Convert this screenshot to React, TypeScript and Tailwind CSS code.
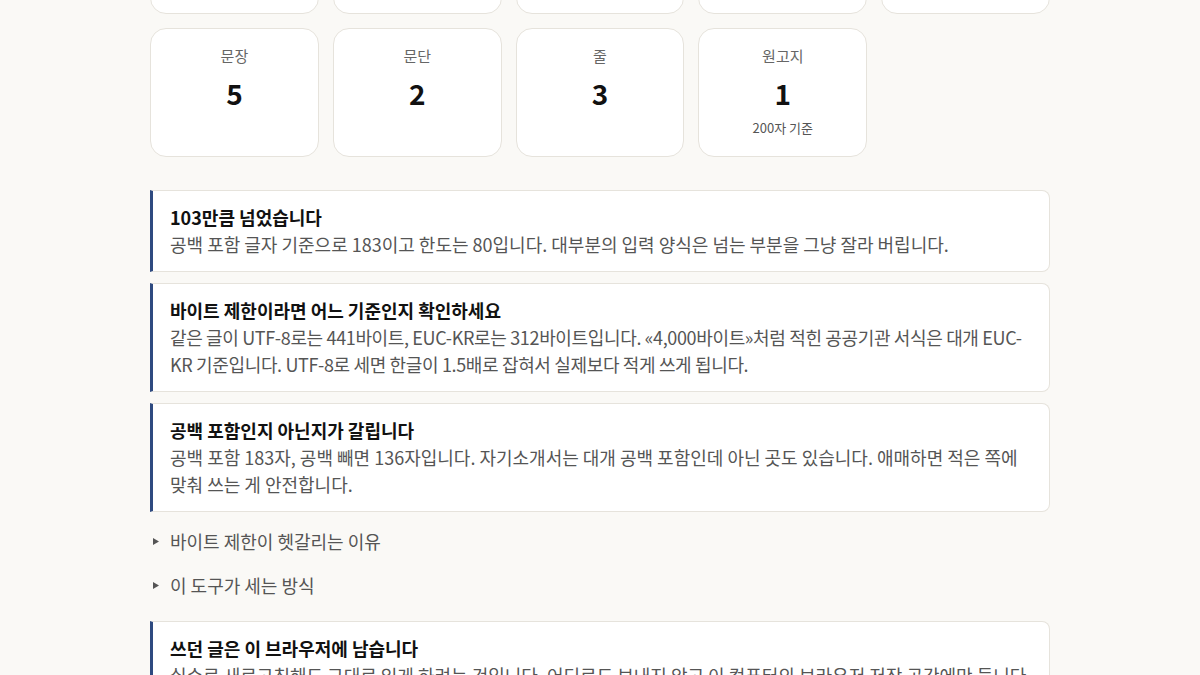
import React from "react";

const topStats = [
  { label: "공백 포함", value: "183" },
  { label: "공백 제외", value: "136" },
  { label: "단어", value: "41" },
  { label: "UTF-8", value: "441", sub: "바이트" },
  { label: "EUC-KR", value: "312", sub: "바이트" },
];

const stats = [
  { label: "문장", value: "5" },
  { label: "문단", value: "2" },
  { label: "줄", value: "3" },
  { label: "원고지", value: "1", sub: "200자 기준" },
];

const notes = [
  {
    title: "103만큼 넘었습니다",
    body: "공백 포함 글자 기준으로 183이고 한도는 80입니다. 대부분의 입력 양식은 넘는 부분을 그냥 잘라 버립니다.",
  },
  {
    title: "바이트 제한이라면 어느 기준인지 확인하세요",
    body: "같은 글이 UTF-8로는 441바이트, EUC-KR로는 312바이트입니다. «4,000바이트»처럼 적힌 공공기관 서식은 대개 EUC-KR 기준입니다. UTF-8로 세면 한글이 1.5배로 잡혀서 실제보다 적게 쓰게 됩니다.",
    tight: true,
  },
  {
    title: "공백 포함인지 아닌지가 갈립니다",
    body: "공백 포함 183자, 공백 빼면 136자입니다. 자기소개서는 대개 공백 포함인데 아닌 곳도 있습니다. 애매하면 적은 쪽에 맞춰 쓰는 게 안전합니다.",
  },
];

const StatCard = ({ label, value, sub }: { label: string; value: string; sub?: string }) => (
  <div className="flex flex-col items-center rounded-2xl border border-[#e6e3dc] bg-white px-3 pb-[19px] pt-[17px] text-center">
    <div className="text-[15px] leading-5 text-[#666]">{label}</div>
    <div className="mt-[10px] text-[28px] font-bold leading-[34px] text-[#111]">{value}</div>
    {sub && <div className="mt-[9px] text-[13px] leading-[18px] text-[#555]">{sub}</div>}
  </div>
);

const Note = ({ title, body, tight }: { title: string; body: string; tight?: boolean }) => (
  <div className="rounded-r-lg border border-l-[3px] border-[#e6e3dc] border-l-[#2e4a80] bg-white py-[13px] pl-[17px] pr-[17px] text-[18px] leading-[27px]">
    <div className="font-bold text-[#111]">{title}</div>
    <p className={tight ? "tracking-[-0.35px] text-[#555]" : "text-[#555]"}>{body}</p>
  </div>
);

const Summary = ({ children }: { children: React.ReactNode }) => (
  <details>
    <summary className="flex cursor-pointer list-none items-center text-[18px] leading-[27px] text-[#555] [&::-webkit-details-marker]:hidden">
      <svg width="6" height="7" viewBox="0 0 6 7" className="ml-[3px] mr-[11px]">
        <polygon points="0,0 6,3.5 0,7" fill="#555" />
      </svg>
      {children}
    </summary>
  </details>
);

export default function App() {
  return (
    <div
      className="h-[675px] overflow-hidden bg-[#faf9f6]"
      style={{ fontFamily: '"Noto Sans CJK KR", "Noto Sans", sans-serif' }}
    >
      <div className="mx-auto -mt-[115px] w-[900px]">
        <div className="grid grid-cols-5 gap-3.5">
          {topStats.map((s) => (
            <StatCard key={s.label} {...s} />
          ))}
          {stats.map((s) => (
            <StatCard key={s.label} {...s} />
          ))}
        </div>

        <div className="mt-[33px] flex flex-col gap-[11px]">
          {notes.map((n) => (
            <Note key={n.title} {...n} />
          ))}
        </div>

        <div className="mt-[16px] flex flex-col gap-[17px]">
          <Summary>바이트 제한이 헷갈리는 이유</Summary>
          <Summary>이 도구가 세는 방식</Summary>
        </div>

        <div className="mt-[22px]">
          <Note
            title="쓰던 글은 이 브라우저에 남습니다"
            body="실수로 새로고침해도 그대로 있게 하려는 것입니다. 어디로도 보내지 않고 이 컴퓨터의 브라우저 저장 공간에만 둡니다. 지우려면 글을 비우면 됩니다."
          />
        </div>
      </div>
    </div>
  );
}
